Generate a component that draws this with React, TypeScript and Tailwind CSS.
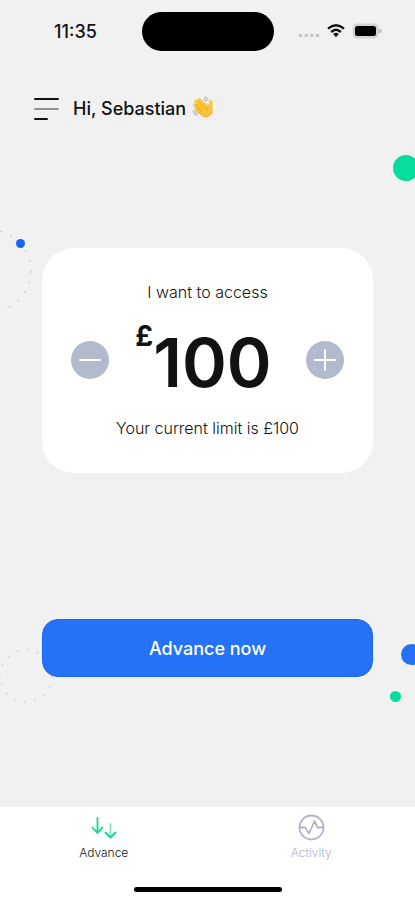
import { useState } from "react";

function StatusBar() {
  return (
    <div className="grid h-[62px] grid-cols-[1fr_132px_1fr] items-center">
      <time className="pt-[2px] pl-[54px] text-lg leading-6 font-medium">11:35</time>
      <div className="h-[39px] rounded-full bg-black" />
      <div className="flex items-center justify-end pr-[33px]">
        <svg className="h-[20px] w-[84px]" viewBox="0 0 84 20" aria-hidden="true">
          <g fill="#c4c4c4">
            <circle cx="2.5" cy="14.5" r="1.8" />
            <circle cx="8.2" cy="14.5" r="1.8" />
            <circle cx="13.8" cy="14.5" r="1.8" />
            <circle cx="19.5" cy="14.5" r="1.8" />
          </g>
          <g fill="none" stroke="#111" strokeWidth="2.4">
            <path d="M30 7.6Q38 0.8 46 7.6" />
            <path d="M33.2 11Q38 6.6 42.8 11" />
          </g>
          <path d="M35.2 13Q38 10.6 40.8 13L38 16.2Z" fill="#111" />
          <rect x="54.500" y="2.500" width="26" height="15" rx="4.500" fill="#d3d3d3" />
          <path d="M80.500 7.500Q84 9 84 10Q83.500 11.500 80.500 12.500Z" fill="#bdbdbd" />
          <rect x="57" y="5" width="21" height="10" rx="2.500" fill="#000" />
        </svg>
      </div>
    </div>
  );
}

function WavingHand() {
  return (
    <svg className="size-[24px]" viewBox="0 0 24 24" role="img" aria-label="Waving hand">
      <g fill="none" stroke="#b9bcc4" strokeWidth="1.500" strokeLinecap="round">
        <path d="M13.800 2.200Q16.200 2.800 17 5" />
        <path d="M13 4.500Q14.500 5 15 6.300" />
        <path d="M2.300 16Q3 19 5.800 20" />
        <path d="M4.600 15.600Q5 17.300 6.600 18" />
      </g>
      <g fill="none" stroke="#fbc43a" strokeWidth="3.200" strokeLinecap="round">
        <path d="M8.200 4.600L15 12" />
        <path d="M4.800 6.200L12 14" />
        <path d="M3.800 10L11 16.500" />
        <path d="M5.200 14L11 18.500" />
      </g>
      <path
        d="M7 12L14 7.500Q16.300 9.800 17.500 10.500Q18.200 8.500 18.400 6.500Q19 4.500 20.600 5.200Q22 5.800 21.500 9Q21.300 11 21.700 14Q22 18 19 20.500Q15.500 23.500 11.500 21Q9 19.500 6.500 15.500Z"
        fill="#fbc43a"
      />
      <g fill="none" stroke="#e59a1b" strokeWidth="0.700" strokeLinecap="round">
        <path d="M7.500 6.500L13.500 13" />
        <path d="M5.500 9.500L11.500 15.200" />
        <path d="M5.500 13L10.500 17" />
        <path d="M17.500 10.500Q14.800 12.500 16 16" />
        <path d="M8 17.500Q12 23 16.500 21.600Q20 20.500 21.200 17" />
      </g>
    </svg>
  );
}

function Decorations() {
  return (
    <div className="pointer-events-none absolute inset-0 overflow-hidden" aria-hidden="true">
      <svg className="absolute top-[228px] -left-[53px] size-[86px]" viewBox="0 0 86 86">
        <circle cx="43" cy="43" r="41" fill="none" stroke="#cfcfcf" strokeWidth="1.500" strokeDasharray="2 8.700" />
      </svg>
      <svg className="absolute top-[648px] -left-[2px] size-[56px]" viewBox="0 0 56 56">
        <circle cx="28" cy="28" r="26" fill="none" stroke="#d4d4d4" strokeWidth="1.500" strokeDasharray="2 8.200" />
      </svg>
      <span className="absolute top-[239px] left-[16px] size-[9px] rounded-full bg-[#1565f5]" />
      <span className="absolute top-[155px] -right-[4px] size-[26px] rounded-full bg-[#07dc9c]" />
      <span className="absolute top-[644px] -right-[7px] size-[21px] rounded-full bg-[#2672f6]" />
      <span className="absolute top-[691px] right-[14px] size-[11px] rounded-full bg-[#07dc9c]" />
    </div>
  );
}

const stepButton = "flex size-[38px] items-center justify-center rounded-full bg-[#b4bacd]";

export default function App() {
  const [amount, setAmount] = useState(100);

  return (
    <div className="relative flex min-h-screen flex-col bg-[#f1f1f1] font-['Inter',sans-serif] text-[#111214]">
      <Decorations />
      <StatusBar />

      <header className="flex items-center pt-[35px] pl-[34px]">
        <button type="button" aria-label="Open menu" className="flex w-[25px] flex-col gap-[8px]">
          <span className="h-[2px] w-full rounded-full bg-[#111214]" />
          <span className="h-[2px] w-full rounded-full bg-[#919191]" />
          <span className="h-[2px] w-[14px] rounded-full bg-[#111214]" />
        </button>
        <h1 className="ml-[14px] text-lg leading-6 font-medium">Hi, Sebastian</h1>
        <span className="ml-[5px] -mt-1">
          <WavingHand />
        </span>
      </header>

      <main className="relative flex grow flex-col px-[42px] pt-[127px]">
        <section className="rounded-[32px] bg-white pt-8 pb-[33px] text-center">
          <p className="text-base leading-6 font-light">I want to access</p>
          <div className="flex h-[112px] items-center justify-between px-[29px]">
            <button
              type="button"
              aria-label="Decrease amount"
              className={stepButton}
              onClick={() => setAmount(Math.max(0, amount - 10))}
            >
              <span className="h-[2px] w-[22px] rounded-full bg-white" />
            </button>
            <output className="flex items-start pr-2 pb-1 font-semibold">
              <span className="pt-[2px] text-[28px] leading-8 font-bold">£</span>
              <span className="pt-2 text-[68px] leading-[72px]">{amount}</span>
            </output>
            <button
              type="button"
              aria-label="Increase amount"
              className={stepButton}
              onClick={() => setAmount(Math.min(100, amount + 10))}
            >
              <svg className="size-[22px]" viewBox="0 0 22 22" aria-hidden="true">
                <path d="M1 11H21M11 1V21" stroke="#fff" strokeWidth="2" strokeLinecap="round" />
              </svg>
            </button>
          </div>
          <p className="text-base leading-6 font-light">Your current limit is £100</p>
        </section>

        <button
          type="button"
          className="mt-[146px] h-[58px] rounded-2xl border border-[#1767ef] bg-[#2672f6] pt-[2px] text-lg font-medium text-white"
        >
          Advance now
        </button>
      </main>

      <nav className="relative bg-white pb-2">
        <div className="grid grid-cols-2 pt-[7px] text-xs leading-4 font-light">
          <a href="#advance" aria-current="page" className="flex flex-col items-center gap-1 text-[#111214]">
            <svg
              className="size-[27px]"
              viewBox="0 0 27 27"
              fill="none"
              strokeWidth="1.800"
              strokeLinecap="round"
              strokeLinejoin="round"
              aria-hidden="true"
            >
              <path d="M7.500 4V18.500M2.500 13.500L7.500 19L12.500 13.500" stroke="#19d18f" />
              <path d="M20.500 10V22" stroke="#7fe5bf" />
              <path d="M15.500 18.500L20.500 23.500L25.500 18.500" stroke="#19d18f" />
            </svg>
            Advance
          </a>
          <a href="#activity" className="flex flex-col items-center gap-1 text-[#b1b5c8]">
            <svg
              className="size-[27px]"
              viewBox="0 0 27 27"
              fill="none"
              stroke="#b1b5c8"
              strokeWidth="1.800"
              strokeLinecap="round"
              strokeLinejoin="round"
              aria-hidden="true"
            >
              <circle cx="13.500" cy="13.500" r="12" />
              <path d="M2 13.500H7L11 19.500L16.500 7L19.500 13.500H25" />
            </svg>
            Activity
          </a>
        </div>
        <div className="mx-auto mt-[26px] h-[5px] w-[148px] rounded-full bg-black" />
      </nav>
    </div>
  );
}
